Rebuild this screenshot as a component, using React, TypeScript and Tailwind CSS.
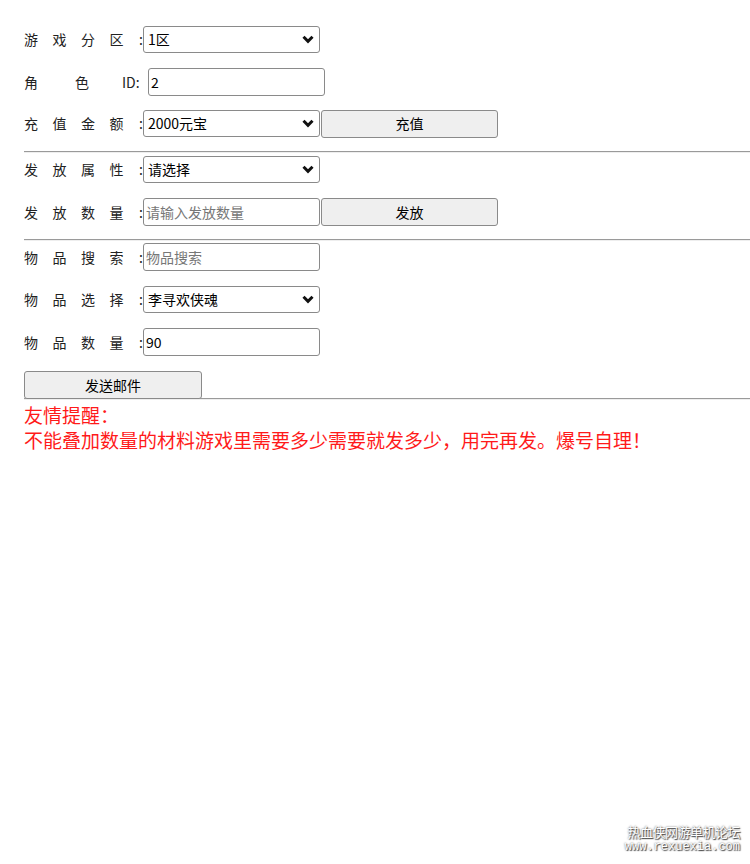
import React from 'react';

const font = { fontFamily: '"Noto Sans CJK SC", "Liberation Sans", sans-serif' };

function Label({ chars }: { chars: string[] }) {
  return (
    <div className="flex w-[119px] shrink-0 items-center text-[14px] text-[#222]">
      {chars.map((c, i) => (
        <span key={i} className="w-[28.5px]">{c}</span>
      ))}
      <span className="ml-auto">:</span>
    </div>
  );
}

function Select({ value }: { value: string }) {
  return (
    <div className="relative h-[27px] w-[177px]">
      <select
        defaultValue={value}
        className="h-full w-full appearance-none rounded-[3px] border border-[#8a8a8a] bg-white pl-[4px] text-[14px] text-black outline-none"
      >
        <option>{value}</option>
      </select>
      <svg className="pointer-events-none absolute right-[6px] top-[9px]" width="12" height="9" viewBox="0 0 12 9">
        <path d="M1.5 1.8 L6 6.3 L10.5 1.8" fill="none" stroke="#111" strokeWidth="3" />
      </svg>
    </div>
  );
}

function Input({ value, placeholder, w = 'w-[177px]' }: { value?: string; placeholder?: string; w?: string }) {
  return (
    <input
      defaultValue={value}
      placeholder={placeholder}
      className={`h-[28px] ${w} rounded-[3px] border border-[#8a8a8a] bg-white px-[2px] text-[14px] text-black outline-none placeholder:text-[#777]`}
    />
  );
}

function Btn({ text, w = 'w-[177px]' }: { text: string; w?: string }) {
  return (
    <button className={`h-[28px] ${w} rounded-[3px] border border-[#8a8a8a] bg-[#efefef] text-[14px] text-black`}>
      {text}
    </button>
  );
}

function Rule() {
  return <div className="h-[2px] border-t border-[#9a9a9a] border-b border-b-[#eeeeee]" />;
}

export default function App() {
  return (
    <div className="relative h-[864px] w-[750px] bg-white pl-[24px] pt-[26px]" style={font}>
      <div className="flex flex-col">
        <div className="flex h-[27px] items-center">
          <Label chars={['游', '戏', '分', '区']} />
          <Select value="1区" />
        </div>

        <div className="mt-[15px] flex h-[28px] items-center">
          <div className="flex w-[124px] shrink-0 items-center text-[14px] text-[#222]">
            <span className="w-[51px]">角</span>
            <span className="w-[47px]">色</span>
            <span>ID:</span>
          </div>
          <Input value="2" />
        </div>

        <div className="mt-[14px] flex h-[27px] items-center">
          <Label chars={['充', '值', '金', '额']} />
          <Select value="2000元宝" />
          <div className="ml-[1px]">
            <Btn text="充值" />
          </div>
        </div>

        <div className="mt-[14px]">
          <Rule />
        </div>

        <div className="mt-[3px] flex h-[27px] items-center">
          <Label chars={['发', '放', '属', '性']} />
          <Select value="请选择" />
        </div>

        <div className="mt-[15px] flex h-[28px] items-center">
          <Label chars={['发', '放', '数', '量']} />
          <Input placeholder="请输入发放数量" />
          <div className="ml-[1px]">
            <Btn text="发放" />
          </div>
        </div>

        <div className="mt-[13px]">
          <Rule />
        </div>

        <div className="mt-[2px] flex h-[28px] items-center">
          <Label chars={['物', '品', '搜', '索']} />
          <Input placeholder="物品搜索" />
        </div>

        <div className="mt-[15px] flex h-[27px] items-center">
          <Label chars={['物', '品', '选', '择']} />
          <Select value="李寻欢侠魂" />
        </div>

        <div className="mt-[15px] flex h-[28px] items-center">
          <Label chars={['物', '品', '数', '量']} />
          <Input value="90" />
        </div>

        <div className="relative mt-[15px] h-[29px]">
          <div className="absolute bottom-0 left-0 right-0">
            <Rule />
          </div>
          <div className="relative">
            <Btn text="发送邮件" w="w-[178px]" />
          </div>
        </div>

        <div className="mt-[2px] text-[19px] leading-[25px] text-[#ff1a1a]">
          <div>友情提醒：</div>
          <div>不能叠加数量的材料游戏里需要多少需要就发多少，用完再发。爆号自理！</div>
        </div>
      </div>

      <div className="absolute bottom-[10px] right-[10px] flex flex-col items-end text-white [text-shadow:0_0_2px_#555,1px_1px_1px_#444]">
        <span className="text-[13px] leading-[16px] tracking-[-0.5px]">热血侠网游单机论坛</span>
        <span className="text-[12px] leading-[14px]" style={{ fontFamily: '"Liberation Mono", monospace' }}>www.rexuexia.com</span>
      </div>
    </div>
  );
}
